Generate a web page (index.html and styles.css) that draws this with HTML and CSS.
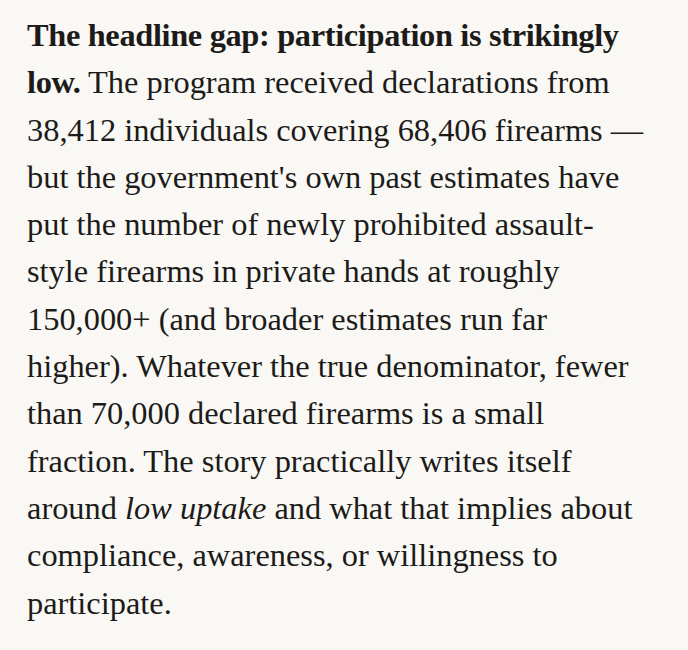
FILE: index.html
```html
<!DOCTYPE html>
<html lang="en">
<head>
<meta charset="utf-8">
<title>Participation</title>
<link rel="stylesheet" href="styles.css">
</head>
<body>
<main class="page">
<p class="para"><strong>The headline gap: participation is strikingly<br>low.</strong> The program received declarations from<br>38,412 individuals covering 68,406 firearms —<br>but the government's own past estimates have<br>put the number of newly prohibited assault-<br>style firearms in private hands at roughly<br>150,000+ (and broader estimates run far<br>higher). Whatever the true denominator, fewer<br>than 70,000 declared firearms is a small<br>fraction. The story practically writes itself<br>around <em>low uptake</em> and what that implies about<br>compliance, awareness, or willingness to<br>participate.</p>
</main>
</body>
</html>
```
FILE: styles.css
```css
html, body {
  margin: 0;
  padding: 0;
  background: #f9f8f4;
}
.page {
  padding: 12px 27px 0 27px;
}
.para {
  margin: 0;
  font-family: "Liberation Serif", "Times New Roman", serif;
  font-size: 32.4px;
  line-height: 47.3px;
  color: #1c1b19;
  white-space: nowrap;
}
.para strong {
  font-weight: 700;
  letter-spacing: -0.35px;
}
.para em {
  font-style: italic;
}
```
